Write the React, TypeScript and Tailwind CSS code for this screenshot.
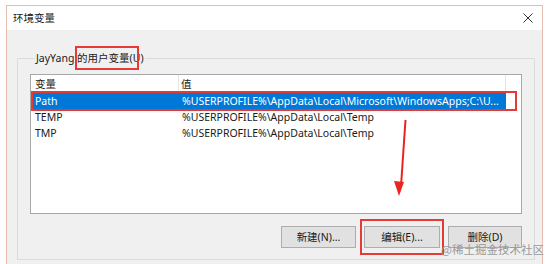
import React from "react";

const font = { fontFamily: '"Noto Sans", "Noto Sans CJK SC", sans-serif' };

export default function App() {
  const rows = [
    { n: "Path", v: "%USERPROFILE%\\AppData\\Local\\Microsoft\\WindowsApps;C:\\U...", sel: true },
    { n: "TEMP", v: "%USERPROFILE%\\AppData\\Local\\Temp", sel: false },
    { n: "TMP", v: "%USERPROFILE%\\AppData\\Local\\Temp", sel: false },
  ];
  return (
    <div
      className="relative w-[554px] h-[264px] overflow-hidden bg-white pt-[5px] pl-[6px] text-[#1a1a1a]"
      style={font}
    >
      <div className="flex flex-col w-[537px] h-[300px] border border-[#e6bcae]">
        {/* title bar */}
        <div className="flex items-center justify-between h-[24px] bg-white pl-[6px] pr-[7px]">
          <span className="text-[10.5px] leading-none">环境变量</span>
          <svg width="12" height="12" viewBox="0 0 12 12" className="mr-[1px]">
            <path d="M1.5 1.5 L10.5 10.5 M10.5 1.5 L1.5 10.5" stroke="#333" strokeWidth="1" />
          </svg>
        </div>
        {/* body */}
        <div className="flex-1 bg-[#f0f0f0] pl-[10px] pt-[21px]">
          <fieldset className="w-[516px] h-[209px] border border-[#dcdcdc] px-[12px] pb-0 pt-0 m-0">
            <legend className="ml-[5px] px-[1px] text-[10.5px] leading-[14px]">JayYang 的用户变量(U)</legend>
            <div className="w-[492px] h-[140px] mt-[9px] bg-white border border-[#a8a8a8] text-[10.5px] leading-none">
              <div className="flex h-[18px] items-center">
                <div className="w-[148px] h-full flex items-center pl-[4px] border-r border-[#e5e5e5]">变量</div>
                <div className="w-[327px] h-full flex items-center pl-[2px] border-r border-[#e5e5e5]">值</div>
              </div>
              {rows.map((r) => (
                <div key={r.n} className="flex h-[16px] items-center pl-[1px]">
                  <div
                    className={
                      r.sel
                        ? "flex w-[474px] h-full items-center bg-[#0078d7] text-white"
                        : "flex w-[474px] h-full items-center"
                    }
                  >
                    <div className="w-[148px] pl-[3px]">{r.n}</div>
                    <div className="pl-[2px] whitespace-nowrap">{r.v}</div>
                  </div>
                </div>
              ))}
            </div>
            <div className="flex justify-end gap-[8px] mt-[12px]">
              <button className="w-[75px] h-[22px] bg-[#e1e1e1] border border-[#adadad] text-[10.5px] leading-none">新建(N)...</button>
              <button className="w-[76px] h-[22px] bg-[#e1e1e1] border border-[#adadad] text-[10.5px] leading-none">编辑(E)...</button>
              <button className="w-[74px] h-[22px] bg-[#e1e1e1] border border-[#adadad] text-[10.5px] leading-none">删除(D)</button>
            </div>
          </fieldset>
        </div>
      </div>

      {/* annotations */}
      <div className="absolute left-[75px] top-[46px] w-[64px] h-[24px] border-2 border-[#e53a35]" />
      <div className="absolute left-[31px] top-[91px] w-[486px] h-[20px] border-2 border-[#e53a35]" />
      <div className="absolute left-[360px] top-[219px] w-[84px] h-[36px] border-2 border-[#e53a35]" />
      <svg className="absolute left-0 top-0" width="554" height="264">
        <path d="M405.5 120 L401 186" stroke="#e8261f" strokeWidth="2" fill="none" />
        <path d="M394 181 L404 182 L399 196 Z" fill="#e8261f" />
      </svg>
      <div
        className="absolute left-[441px] top-[244px] text-[11.5px] leading-[11px] text-[#9a9a9a] whitespace-nowrap"
        style={{ fontFamily: '"Noto Sans CJK SC", sans-serif' }}
      >
        @稀土掘金技术社区
      </div>
    </div>
  );
}
